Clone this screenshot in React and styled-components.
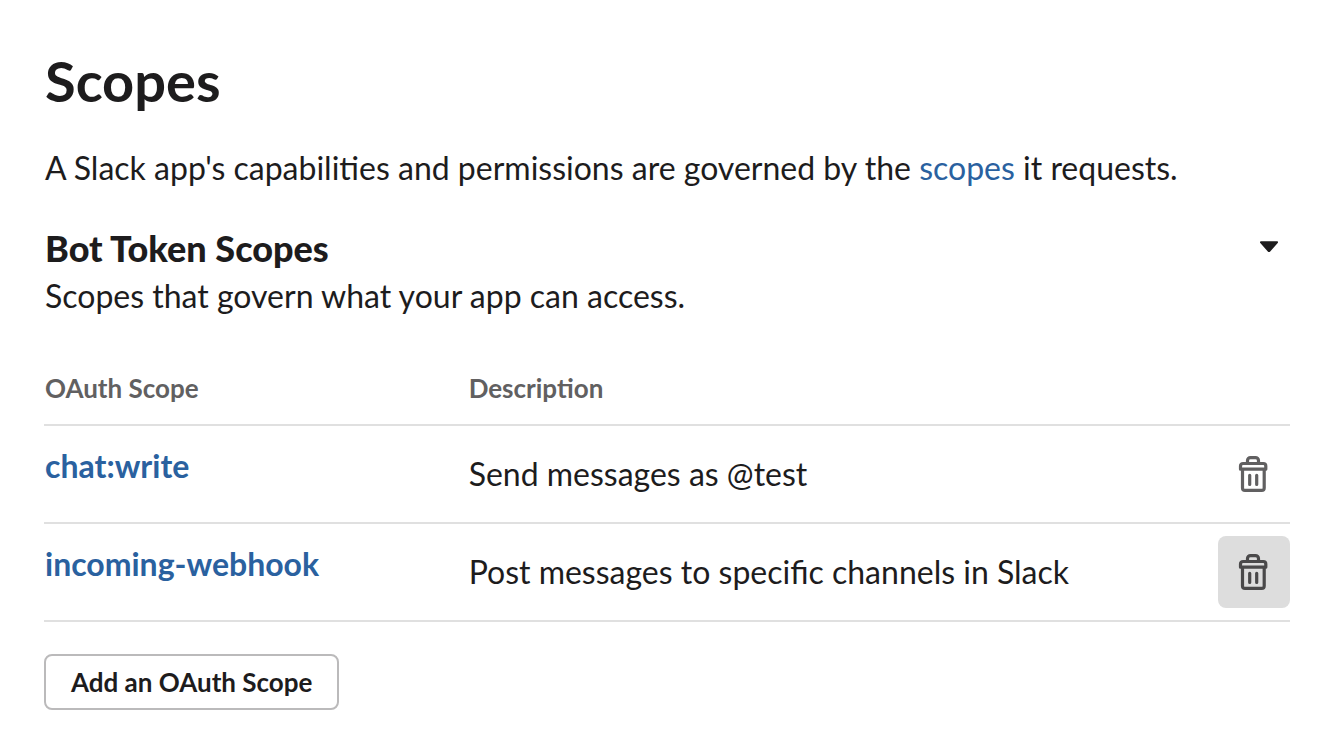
import React from 'react';
import styled, { createGlobalStyle } from 'styled-components';

const scopes = [
  { name: 'chat:write', description: 'Send messages as @test' },
  {
    name: 'incoming-webhook',
    description: 'Post messages to specific channels in Slack',
    active: true,
  },
];

function TrashIcon() {
  return (
    <svg
      width="36"
      height="36"
      viewBox="0 0 36 36"
      fill="none"
      stroke="currentColor"
      strokeWidth="3.2"
      strokeLinecap="round"
      strokeLinejoin="round"
      aria-hidden="true"
    >
      <path d="M11.5 7V4.6a3 3 0 0 1 3-3h5a3 3 0 0 1 3 3V7" />
      <path d="M7 7.5h20.3a2.5 2.5 0 0 1 2.5 2.5v3.2H4.5V10a2.5 2.5 0 0 1 2.5-2.5Z" />
      <path d="M6.5 13.5v18.4a2.5 2.5 0 0 0 2.5 2.5h16.7a2.5 2.5 0 0 0 2.5-2.5V13.5" />
      <path d="M13.7 19.3v9.2M20.7 19.3v9.2" />
    </svg>
  );
}

function CaretIcon() {
  return (
    <svg width="20" height="12" viewBox="0 0 20 12" aria-hidden="true">
      <path
        d="M2 .3h16c1 0 1.3 1 .7 1.7l-7.5 8.4c-.7.8-1.7.8-2.4 0L1.3 2C.7 1.3 1 .3 2 .3Z"
        fill="currentColor"
      />
    </svg>
  );
}

export default function App() {
  return (
    <>
      <GlobalStyle />
      <Wrapper>
        <Title>Scopes</Title>
        <Intro>
          A Slack app's capabilities and permissions are governed by the{' '}
          <TextLink href="#scopes">scopes</TextLink> it requests.
        </Intro>
        <SectionHeader>
          <SectionTitle>Bot Token Scopes</SectionTitle>
          <ToggleButton type="button" aria-label="Toggle bot token scopes">
            <CaretIcon />
          </ToggleButton>
        </SectionHeader>
        <Text>Scopes that govern what your app can access.</Text>
        <Table>
          <thead>
            <tr>
              <HeadCell $width="34%">OAuth Scope</HeadCell>
              <HeadCell>Description</HeadCell>
              <HeadCell $width="72px" aria-label="Actions" />
            </tr>
          </thead>
          <tbody>
            {scopes.map(scope => (
              <tr key={scope.name}>
                <NameCell>
                  <ScopeLink href={`#${scope.name}`}>{scope.name}</ScopeLink>
                </NameCell>
                <Cell>{scope.description}</Cell>
                <ActionCell>
                  <DeleteButton
                    type="button"
                    aria-label={`Delete ${scope.name}`}
                    $active={scope.active}
                  >
                    <TrashIcon />
                  </DeleteButton>
                </ActionCell>
              </tr>
            ))}
          </tbody>
        </Table>
        <AddButton type="button">Add an OAuth Scope</AddButton>
      </Wrapper>
    </>
  );
}

const GlobalStyle = createGlobalStyle`
  * {
    box-sizing: border-box;
  }
  body {
    margin: 0;
    background: #fff;
    color: #1d1c1d;
    font-family: Lato, sans-serif;
    font-size: 32px;
    line-height: 48px;
  }
  button {
    font-family: inherit;
    cursor: pointer;
  }
`;

const Wrapper = styled.main`
  padding: 46px 48px 40px 44px;
`;

const Title = styled.h1`
  margin: 0 0 28px;
  padding: 0 1px;
  font-size: 56px;
  font-weight: 700;
  line-height: 70px;
`;

const Text = styled.p`
  margin: 0;
  padding: 0 1px;
`;

const Intro = styled(Text)`
  margin-bottom: 32px;
`;

const TextLink = styled.a`
  color: #2a619f;
  text-decoration: none;
`;

const SectionHeader = styled.div`
  display: flex;
  align-items: center;
  justify-content: space-between;
`;

const SectionTitle = styled.h2`
  margin: 0;
  padding: 0 1px;
  font-size: 36px;
  font-weight: 900;
`;

const ToggleButton = styled.button`
  display: flex;
  padding: 12px 11px 14px;
  border: 0;
  background: none;
  color: #1d1c1d;
`;

const Table = styled.table`
  width: 100%;
  margin: 48px 0 32px;
  border-collapse: separate;
  border-spacing: 0;
  table-layout: fixed;
`;

const HeadCell = styled.th`
  width: ${props => props.$width || 'auto'};
  padding: 0 0 16px 1px;
  border-bottom: 2px solid #e0e0e0;
  color: #616061;
  font-size: 26px;
  font-weight: 700;
  line-height: 40px;
  text-align: left;
`;

const Cell = styled.td`
  padding: 12px 0 12px 1px;
  border-bottom: 2px solid #e0e0e0;
  vertical-align: middle;
`;

const NameCell = styled(Cell)`
  padding-top: 16px;
  vertical-align: top;
`;

const ActionCell = styled(Cell)`
  padding-left: 0;
`;

const ScopeLink = styled(TextLink)`
  font-weight: 700;
`;

const DeleteButton = styled.button`
  display: flex;
  align-items: center;
  justify-content: center;
  width: 72px;
  height: 72px;
  padding: 0;
  border: 0;
  border-radius: 8px;
  background: ${props => (props.$active ? '#dddddd' : 'transparent')};
  color: ${props => (props.$active ? '#4a494a' : '#616061')};
`;

const AddButton = styled.button`
  height: 56px;
  padding: 0 25px;
  border: 2px solid #bbbabb;
  border-radius: 8px;
  background: #fff;
  color: #1d1c1d;
  font-size: 26px;
  font-weight: 700;
`;
